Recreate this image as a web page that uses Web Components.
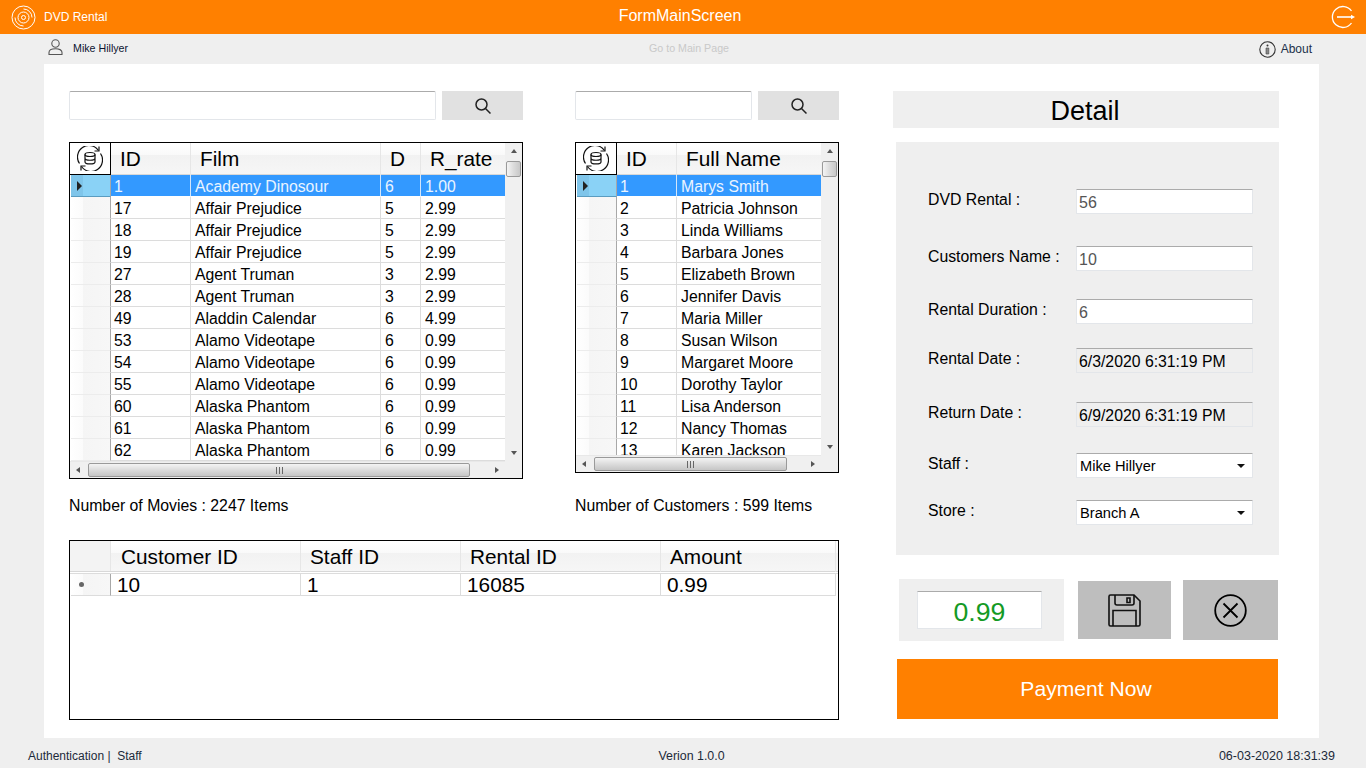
<!DOCTYPE html>
<html>
<head>
<meta charset="utf-8">
<title>DVD Rental</title>
<style>
  html, body { margin: 0; height: 768px; overflow: hidden; }
  body { background: #efefef; font-family: "Liberation Sans", Arial, sans-serif; color: #000; display: flex; flex-direction: column; }
</style>
</head>
<body>
<app-header></app-header>
<app-subbar></app-subbar>
<rental-screen>
  <catalog-panel input-width="367" width="454" label="Number of Movies : 2247 Items">
    <data-grid source="movies" style="height:337px"></data-grid>
  </catalog-panel>
  <catalog-panel input-width="177" width="264" label="Number of Customers : 599 Items">
    <data-grid source="customers" style="height:331px"></data-grid>
  </catalog-panel>
  <data-grid slot="cart" source="cart"></data-grid>
  <detail-panel slot="detail"></detail-panel>
</rental-screen>
<app-footer></app-footer>

<script>
const ICONS = {
  search: '<svg width="18" height="18" viewBox="0 0 18 18" fill="none" stroke="#222" stroke-width="1.5"><circle cx="7.5" cy="7.5" r="5.5"/><path d="M11.5 11.5L16.5 16.5"/></svg>',
  refresh: '<svg width="26" height="25" viewBox="0 0 26 25" fill="none" stroke="#111" stroke-width="1.2"><path d="M2.500 17.500A11.500 11.500 0 0 1 21.500 4.500"/><path d="M23.500 7.500A11.500 11.500 0 0 1 4.500 20.500"/><path d="M22 .5V5H17.500M4 24.500V20H8.500"/><ellipse cx="13" cy="8.500" rx="5" ry="2"/><path d="M8 8.500V16C8 18.600 18 18.600 18 16V8.500M8 12.300C8 14.900 18 14.900 18 12.300"/></svg>'
}

const DATA = {
  movies: {
    cols: [['ID', 80], ['Film', 190], ['D', 40], ['R_rate', 85]],
    rows: [
      ['1', 'Academy Dinosour', '6', '1.00'], ['17', 'Affair Prejudice', '5', '2.99'],
      ['18', 'Affair Prejudice', '5', '2.99'], ['19', 'Affair Prejudice', '5', '2.99'],
      ['27', 'Agent Truman', '3', '2.99'], ['28', 'Agent Truman', '3', '2.99'],
      ['49', 'Aladdin Calendar', '6', '4.99'], ['53', 'Alamo Videotape', '6', '0.99'],
      ['54', 'Alamo Videotape', '6', '0.99'], ['55', 'Alamo Videotape', '6', '0.99'],
      ['60', 'Alaska Phantom', '6', '0.99'], ['61', 'Alaska Phantom', '6', '0.99'],
      ['62', 'Alaska Phantom', '6', '0.99']
    ],
    thumb: [18, 382, 203]
  },
  customers: {
    cols: [['ID', 60], ['Full Name', 145]],
    rows: [
      ['1', 'Marys Smith'], ['2', 'Patricia Johnson'], ['3', 'Linda Williams'], ['4', 'Barbara Jones'],
      ['5', 'Elizabeth Brown'], ['6', 'Jennifer Davis'], ['7', 'Maria Miller'], ['8', 'Susan Wilson'],
      ['9', 'Margaret Moore'], ['10', 'Dorothy Taylor'], ['11', 'Lisa Anderson'], ['12', 'Nancy Thomas'],
      ['13', 'Karen Jackson']
    ],
    thumb: [18, 193, 115]
  },
  cart: {
    cols: [['Customer ID', 190], ['Staff ID', 160], ['Rental ID', 200], ['Amount', 175]],
    rows: [['10', '1', '16085', '0.99']],
    plain: true
  }
}

class AppHeader extends HTMLElement {
  constructor () {
    super()
    this.attachShadow({ mode: 'open' }).innerHTML = /* html */ `
      <style>
        :host { display: grid; grid-template-columns: 1fr auto 1fr; align-items: center; height: 34px; background: #ff8000; color: #fff; flex: none; }
        .brand { display: flex; align-items: center; gap: 8px; padding-left: 11px; font-size: 12px; }
        .title { font-size: 16px; position: relative; left: -3px; top: -1px; }
        .exit { justify-self: end; display: flex; padding-right: 11px; }
        svg { display: block; }
      </style>
      <div class="brand">
        <svg width="25" height="25" viewBox="0 0 25 25" fill="none" stroke="#fff" stroke-width="1">
          <circle cx="12.500" cy="12.500" r="11.500"/><circle cx="12.500" cy="12.500" r="5.500"/><circle cx="12.500" cy="12.500" r="2"/>
          <path d="M12.500 4A8.500 8.500 0 0 1 21 12.500M12.500 21A8.500 8.500 0 0 1 4 12.500"/>
        </svg>
        <span>DVD Rental</span>
      </div>
      <div class="title">FormMainScreen</div>
      <div class="exit">
        <svg width="25" height="24" viewBox="0 0 25 24" fill="none" stroke="#fff" stroke-width="1.300">
          <path d="M21.500 6A10.500 10.500 0 1 0 21.500 18"/>
          <path d="M7 12H22" stroke-width="1.600"/><path d="M21 9.800L25 12L21 14.200Z" fill="#fff" stroke="none"/>
        </svg>
      </div>`
  }
}

class AppSubbar extends HTMLElement {
  constructor () {
    super()
    this.attachShadow({ mode: 'open' }).innerHTML = /* html */ `
      <style>
        :host { display: grid; grid-template-columns: 1fr auto 1fr; align-items: center; height: 30px; flex: none; font-size: 10.670px; color: #0d1330; }
        .user { display: flex; align-items: center; gap: 10px; padding-left: 48px; }
        .user svg { position: relative; top: -2px; }
        .user span, .main { position: relative; top: -1px; }
        .main { color: #c9c9c9; left: 6px; }
        .about { justify-self: end; display: flex; align-items: center; gap: 5px; padding-right: 54px; font-size: 12px; color: #20304a; }
        svg { display: block; }
      </style>
      <div class="user">
        <svg width="15" height="17" viewBox="0 0 15 17" fill="none" stroke="#555" stroke-width="1.100">
          <circle cx="7.500" cy="4.500" r="3.700"/><path d="M1 15.500V13.500C1 11 4 9.800 7.500 9.800S14 11 14 13.500V15.500Z"/>
        </svg>
        <span>Mike Hillyer</span>
      </div>
      <div class="main">Go to Main Page</div>
      <div class="about">
        <svg width="17" height="17" viewBox="0 0 17 17" fill="none" stroke="#333" stroke-width="1.100">
          <circle cx="8.500" cy="8.500" r="7.700"/><circle cx="8.500" cy="4.500" r="1" fill="#333" stroke="none"/>
          <path d="M7 7H9.800V13H7Z" fill="#888" stroke="#444" stroke-width=".6"/>
        </svg>
        <span>About</span>
      </div>`
  }
}

class RentalScreen extends HTMLElement {
  constructor () {
    super()
    this.attachShadow({ mode: 'open' }).innerHTML = /* html */ `
      <style>
        :host { display: flex; height: 674px; margin: 0 47px 0 44px; background: #fff; flex: none; box-sizing: border-box; padding: 27px 40px 0 25px; justify-content: space-between; }
        .left { display: flex; flex-direction: column; width: 770px; }
        .lists { display: flex; justify-content: space-between; }
        ::slotted([slot="cart"]) { margin-top: 25px; height: 180px; }
      </style>
      <div class="left">
        <div class="lists"><slot></slot></div>
        <slot name="cart"></slot>
      </div>
      <slot name="detail"></slot>`
  }
}

class CatalogPanel extends HTMLElement {
  constructor () {
    super()
    this.attachShadow({ mode: 'open' })
  }

  connectedCallback () {
    this.shadowRoot.innerHTML = /* html */ `
      <style>
        :host { display: grid; grid-template-rows: 29px 337px auto; row-gap: 22px; width: ${this.getAttribute('width')}px; }
        .search { display: flex; gap: 6px; }
        .box { width: ${this.getAttribute('input-width')}px; box-sizing: border-box; background: #fff; border: 1px solid #e3e6ea; border-top-color: #ababab; border-radius: 2px; }
        .btn { flex: 1; background: #e1e1e1; display: flex; align-items: center; justify-content: center; }
        .count { font-size: 15.800px; line-height: 18px; margin-top: -4px; }
        svg { display: block; }
      </style>
      <div class="search"><div class="box"></div><div class="btn">${ICONS.search}</div></div>
      <div><slot></slot></div>
      <div class="count">${this.getAttribute('label')}</div>`
  }
}

class DataGrid extends HTMLElement {
  constructor () {
    super()
    this.attachShadow({ mode: 'open' })
  }

  connectedCallback () {
    this.data = DATA[this.getAttribute('source')]
    this.render()
  }

  render () {
    const { cols, rows, plain, thumb } = this.data
    const tpl = cols.map(c => c[1] + 'px').join(' ')
    const head = cols.map(c => `<div class="hc">${c[0]}</div>`).join('')
    const body = rows.map((r, i) => /* html */ `
      <div class="row ${!plain && i === 0 ? 'sel' : ''}">
        <div class="rh">${plain ? '<i class="dot"></i>' : i === 0 ? '<i class="tri"></i>' : ''}</div>
        <div class="cells">${r.map(v => `<div class="c">${v}</div>`).join('')}</div>
      </div>`).join('')
    this.shadowRoot.innerHTML = /* html */ `
      <style>
        :host { display: block; box-sizing: border-box; border: 1px solid #000; background: #fff; overflow: hidden; }
        * { box-sizing: border-box; }
        .wrap { display: grid; grid-template-columns: 1fr ${plain ? '0' : '17px'}; grid-template-rows: 1fr ${plain ? '0' : '17px'}; height: 100%; }
        .view { overflow: hidden; min-width: 0; min-height: 0; }
        .head { display: flex; height: 32px; background: linear-gradient(#fff, #f9f9f9 40%, #f2f2f2 40%, #f6f6f6); border-bottom: 1px solid #d8d8d8; }
        .corner { width: 41px; flex: none; height: 32px; border-right: 1px solid #000; border-bottom: 1px solid #000; background: #fff; display: flex; align-items: center; justify-content: center; }
        .hcells, .cells { display: grid; grid-template-columns: ${tpl}; }
        .hc { font-size: 20.800px; line-height: 32px; padding-left: 9px; border-right: 1px solid #e6e6e6; white-space: nowrap; }
        .row { display: flex; height: 22px; }
        .rh { width: 40px; flex: none; margin-left: 1px; border-right: 1px solid #a8a8a8; border-bottom: 1px solid #ececec; background: linear-gradient(90deg, #fff, #fbfbfb 30%, #f5f5f5 30%, #f7f7f7); display: flex; align-items: center; padding-left: 6px; }
        .c { font-size: 15.800px; line-height: 24px; height: 22px; padding-left: 4px; border-right: 1px solid #dcdcdc; border-bottom: 1px solid #dcdcdc; white-space: nowrap; overflow: hidden; }
        .c:first-child { padding-left: 3px; }
        .sel .c { background: #3399ff; color: #eaf4ff; border-right-color: #d4e6fa; border-bottom-color: #fff; }
        .sel .rh { background: linear-gradient(90deg, #7fc5ea 30%, #8ad2f6 30%); border-bottom: 1px solid #5a9cc0; }
        .tri { width: 0; height: 0; border-left: 5px solid #222; border-top: 5px solid transparent; border-bottom: 5px solid transparent; }
        .dot { width: 5px; height: 5px; border-radius: 50%; background: #666; margin-left: 2px; }
        .sb { background: #f0f0f0; position: relative; display: flex; align-items: center; justify-content: space-between; }
        .sb.v { flex-direction: column; padding: 6px 0; }
        .sb.h { padding: 0 6px; border-top: 1px solid #e8e8e8; }
        .thumb { position: absolute; border: 1px solid #9a9a9a; border-radius: 2px; display: flex; align-items: center; justify-content: center; }
        .v .thumb { left: 1px; right: 1px; top: 18px; height: 16px; background: linear-gradient(90deg, #f4f4f4, #dcdcdc 50%, #c8c8c8); }
        .h .thumb { top: 1px; bottom: 1px; left: ${thumb ? thumb[0] : 0}px; width: ${thumb ? thumb[1] : 0}px; background: linear-gradient(#f4f4f4, #dcdcdc 50%, #c6c6c6); }
        .grip { width: 7px; height: 7px; background: repeating-linear-gradient(90deg, #666 0 1px, transparent 1px 3px); }
        .ar { width: 0; height: 0; border: 3.500px solid transparent; }
        .up { border-bottom: 4px solid #555; border-top: 0; }
        .dn { border-top: 4px solid #555; border-bottom: 0; }
        .lf { border-right: 4px solid #555; border-left: 0; }
        .rg { border-left: 4px solid #555; border-right: 0; }
        .corner2 { background: #f0f0f0; }
        ${plain ? `
          .head { height: 31px; margin-bottom: 1px; }
          .corner { width: 41px; height: 30px; border: 0; border-right: 1px solid #e6e6e6; background: #f3f3f3; }
          .hc:first-child { padding-left: 10px; }
          .hc { line-height: 31px; }
          .c, .c:first-child { font-size: 20.800px; padding-left: 6px; line-height: 21px; }
          .row { border-top: 1px solid #dcdcdc; height: 23px; }
          .rh { border-bottom: 1px solid #dcdcdc; }
          .sb { display: none; }
        ` : ''}
      </style>
      <div class="wrap">
        <div class="view">
          <div class="head">
            <div class="corner">${plain ? '' : ICONS.refresh}</div>
            <div class="hcells">${head}</div>
          </div>
          ${body}
        </div>
        <div class="sb v"><i class="ar up"></i><div class="thumb"></div><i class="ar dn"></i></div>
        <div class="sb h"><i class="ar lf"></i><div class="thumb"><i class="grip"></i></div><i class="ar rg"></i></div>
        <div class="corner2"></div>
      </div>`
  }
}

class FormRow extends HTMLElement {
  constructor () {
    super()
    this.attachShadow({ mode: 'open' })
  }

  connectedCallback () {
    const kind = this.getAttribute('kind') || 'text'
    this.shadowRoot.innerHTML = /* html */ `
      <style>
        :host { display: grid; grid-template-columns: 148px 177px; align-items: center; height: 25px; margin-top: ${this.getAttribute('gap')}px; font-size: 15.800px; }
        .label { position: relative; top: -2px; }
        .val { height: 25px; box-sizing: border-box; background: #fff; border: 1px solid #e3e6ea; border-top-color: #ababab; border-radius: 1px; padding: 2px 0 0 2px; display: flex; align-items: center; justify-content: space-between; white-space: nowrap; }
        .text { color: #555; font-size: 16px; }
        .date { background: #efefef; font-size: 15.800px; }
        .select { font-size: 14.670px; padding: 0 0 0 3px; }
        .arrow { width: 0; height: 0; border: 4px solid transparent; border-top: 4px solid #111; border-bottom: 0; margin-right: 7px; }
      </style>
      <div class="label">${this.getAttribute('label')}</div>
      <div class="val ${kind}"><span>${this.getAttribute('value')}</span>${kind === 'select' ? '<i class="arrow"></i>' : ''}</div>`
  }
}

class DetailPanel extends HTMLElement {
  constructor () {
    super()
    this.attachShadow({ mode: 'open' }).innerHTML = /* html */ `
      <style>
        :host { display: flex; flex-direction: column; width: 386px; }
        .title { height: 37px; background: #efefef; font-size: 27px; line-height: 40px; text-align: center; padding-right: 2px; box-sizing: border-box; }
        .form { margin: 14px 0 0 3px; height: 413px; box-sizing: border-box; background: #efefef; padding: 15px 0 0 32px; }
        .actions { display: flex; margin: 24px 0 0 6px; height: 62px; align-items: center; }
        .total { width: 165px; height: 62px; background: #efefef; display: flex; align-items: center; justify-content: center; padding-right: 4px; box-sizing: border-box; }
        .amount { width: 125px; height: 38px; box-sizing: border-box; background: #fff; border: 1px solid #e3e6ea; border-top-color: #ababab; color: #149a24; font-size: 26.670px; line-height: 40px; text-align: center; }
        .save, .cancel { background: #bebebe; display: flex; align-items: center; justify-content: center; }
        .save { width: 93px; height: 58px; margin-left: 14px; }
        .cancel { width: 95px; height: 60px; margin-left: 12px; }
        .pay { margin: 18px 1px 0 4px; height: 60px; background: #ff8000; color: #fff; font-size: 21.100px; line-height: 60px; text-align: center; padding-right: 3px; box-sizing: border-box; }
        svg { display: block; }
      </style>
      <div class="title">Detail</div>
      <div class="form">
        <form-row gap="32" label="DVD Rental :" value="56"></form-row>
        <form-row gap="32" label="Customers Name :" value="10"></form-row>
        <form-row gap="28" label="Rental Duration :" value="6"></form-row>
        <form-row gap="24" kind="date" label="Rental Date :" value="6/3/2020 6:31:19 PM"></form-row>
        <form-row gap="29" kind="date" label="Return Date :" value="6/9/2020 6:31:19 PM"></form-row>
        <form-row gap="26" kind="select" label="Staff :" value="Mike Hillyer"></form-row>
        <form-row gap="22" kind="select" label="Store :" value="Branch A"></form-row>
      </div>
      <div class="actions">
        <div class="total"><div class="amount">0.99</div></div>
        <div class="save">
          <svg width="33" height="33" viewBox="0 0 33 33" fill="none" stroke="#111" stroke-width="1.600">
            <path d="M2.500 1H26L32 7V30.500A1.500 1.500 0 0 1 30.500 32H2.500A1.500 1.500 0 0 1 1 30.500V2.500A1.500 1.500 0 0 1 2.500 1Z"/>
            <path d="M7 1V9A2 2 0 0 0 9 11H24A2 2 0 0 0 26 9V1"/><path d="M19 4H22V8.500H19Z" stroke-width="1.600"/>
            <path d="M5 32V16.500H28V32"/>
          </svg>
        </div>
        <div class="cancel">
          <svg width="33" height="33" viewBox="0 0 33 33" fill="none" stroke="#000" stroke-width="1.800">
            <circle cx="16.500" cy="16.500" r="15.300"/><path d="M9.500 9.500L23.500 23.500M23.500 9.500L9.500 23.500"/>
          </svg>
        </div>
      </div>
      <div class="pay">Payment Now</div>`
  }
}

class AppFooter extends HTMLElement {
  constructor () {
    super()
    this.attachShadow({ mode: 'open' }).innerHTML = /* html */ `
      <style>
        :host { display: grid; grid-template-columns: 1fr auto 1fr; align-items: center; height: 30px; padding: 6px 31px 0 28px; box-sizing: border-box; font-size: 12px; color: #1c2a3a; flex: none; white-space: pre; }
        .ver { position: relative; left: 10px; font-size: 12.400px; }
        .time { justify-self: end; font-size: 12.500px; }
      </style>
      <div>Authentication |  Staff</div>
      <div class="ver">Verion 1.0.0</div>
      <div class="time">06-03-2020 18:31:39</div>`
  }
}

customElements.define('app-header', AppHeader)
customElements.define('app-subbar', AppSubbar)
customElements.define('rental-screen', RentalScreen)
customElements.define('catalog-panel', CatalogPanel)
customElements.define('data-grid', DataGrid)
customElements.define('form-row', FormRow)
customElements.define('detail-panel', DetailPanel)
customElements.define('app-footer', AppFooter)
</script>
</body>
</html>
